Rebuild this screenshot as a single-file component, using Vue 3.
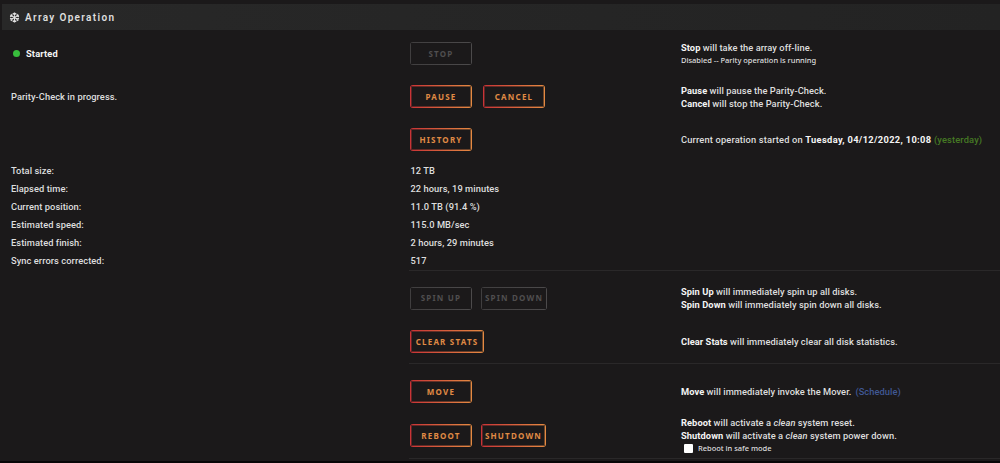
<template>
  <div class="page">
    <header class="title">
      <svg class="title__icon" viewBox="0 0 12 12" aria-hidden="true">
        <g v-for="angle in [0, 60, 120, 180, 240, 300]" :key="angle" :transform="`rotate(${angle} 6 6)`">
          <path d="M6 6V.6M4.2 1.4 6 3 7.8 1.4" />
        </g>
      </svg>
      <span>Array Operation</span>
    </header>

    <section class="group">
      <div class="row">
        <div class="status"><span class="orb"></span><b>Started</b></div>
        <div class="buttons"><button disabled>Stop</button></div>
        <div class="info">
          <p><b>Stop</b> will take the array off-line.</p>
          <p class="small">Disabled -- Parity operation is running</p>
        </div>
      </div>
      <div class="row">
        <div>Parity-Check in progress.</div>
        <div class="buttons buttons--wide"><button>Pause</button><button>Cancel</button></div>
        <div class="info">
          <p><b>Pause</b> will pause the Parity-Check.</p>
          <p><b>Cancel</b> will stop the Parity-Check.</p>
        </div>
      </div>
      <div class="row">
        <div></div>
        <div class="buttons"><button>History</button></div>
        <div class="info">
          <p class="started">
            Current operation started on <b class="date">Tuesday, 04/12/2022, 10:08</b>
            <span class="green"> (yesterday)</span>
          </p>
        </div>
      </div>
      <div v-for="item in details" :key="item.label" class="row row--detail">
        <div>{{ item.label }}</div>
        <div>{{ item.value }}</div>
      </div>
    </section>

    <section class="group group--line">
      <div class="row">
        <div></div>
        <div class="buttons"><button disabled>Spin up</button><button class="w66" disabled>Spin down</button></div>
        <div class="info">
          <p><b>Spin Up</b> will immediately spin up all disks.</p>
          <p><b>Spin Down</b> will immediately spin down all disks.</p>
        </div>
      </div>
      <div class="row">
        <div></div>
        <div class="buttons"><button class="w74">Clear stats</button></div>
        <div class="info">
          <p><b>Clear Stats</b> will immediately clear all disk statistics.</p>
        </div>
      </div>
    </section>

    <section class="group group--line">
      <div class="row">
        <div></div>
        <div class="buttons"><button>Move</button></div>
        <div class="info">
          <p><b>Move</b> will immediately invoke the Mover. <a class="schedule" href="#">(Schedule)</a></p>
        </div>
      </div>
      <div class="row row--last">
        <div></div>
        <div class="buttons"><button>Reboot</button><button class="w65">Shutdown</button></div>
        <div class="info">
          <p><b>Reboot</b> will activate a <em>clean</em> system reset.</p>
          <p><b>Shutdown</b> will activate a <em>clean</em> system power down.</p>
          <label class="small safemode"><input v-model="safemode" type="checkbox" />Reboot in safe mode</label>
        </div>
      </div>
    </section>
    <div class="group--line"></div>
  </div>
</template>

<script setup>
import { ref } from "vue";

const safemode = ref(false);

const details = [
  { label: "Total size:", value: "12 TB" },
  { label: "Elapsed time:", value: "22 hours, 19 minutes" },
  { label: "Current position:", value: "11.0 TB (91.4 %)" },
  { label: "Estimated speed:", value: "115.0 MB/sec" },
  { label: "Estimated finish:", value: "2 hours, 29 minutes" },
  { label: "Sync errors corrected:", value: "517" },
];
</script>

<style scoped>
.page {
  box-sizing: border-box;
  height: 463px;
  padding: 4px 0 0 2px;
  overflow: hidden;
  background: #1b191a;
  border-bottom: 2px solid #080607;
  color: #dedede;
  font-family: Roboto, "Noto Sans", sans-serif;
  font-size: 9.3px;
  font-weight: 500;
  letter-spacing: 0.06px;
  line-height: 13px;
}

.title {
  display: flex;
  align-items: center;
  gap: 5px;
  height: 26px;
  margin-bottom: 2px;
  padding-left: 7px;
  background: linear-gradient(90deg, #282828, #232323);
  font-size: 10px;
  font-weight: 600;
  letter-spacing: 1.33px;
}

.title__icon {
  width: 11px;
  height: 11px;
  fill: none;
  stroke: #e0e0e0;
  stroke-width: 1.2;
}

.row {
  display: grid;
  grid-template-columns: 399px 271px 1fr;
  align-items: center;
  height: 43.2px;
  padding-left: 9px;
  white-space: nowrap;
}

.row--detail {
  grid-template-columns: 399.5px 270.5px 1fr;
  height: 18.05px;
}

.row--last {
  height: 45px;
}

.group--line::before {
  content: "";
  display: block;
  height: 1px;
  margin: 0 0 6px 407px;
  background: #2a2829;
}

.status {
  display: flex;
  align-items: center;
  gap: 5px;
  padding-left: 2px;
}

.status b {
  letter-spacing: 0.15px;
}

.orb {
  width: 7px;
  height: 7px;
  margin-right: 1px;
  border-radius: 50%;
  background: #38bd3c;
}

b {
  color: #f4f4f4;
  font-weight: 700;
}

.started {
  letter-spacing: 0.15px;
}

.date {
  letter-spacing: 0.34px;
}

p {
  margin: 0;
}

.buttons {
  display: flex;
  gap: 9px;
}

.buttons--wide {
  gap: 11px;
}

/* the half transparent layer softens the inner edge of the gradient border */
button {
  box-sizing: border-box;
  width: 62px;
  height: 23px;
  padding: 0;
  border: 0;
  border-radius: 3px;
  background:
    linear-gradient(#1b191a, #1b191a) center / calc(100% - 4px) calc(100% - 4px) no-repeat,
    linear-gradient(#1b191a99, #1b191a99) center / calc(100% - 2px) calc(100% - 2px) no-repeat,
    linear-gradient(90deg, #c93336, #e58a42);
  color: #e08b45;
  font-family: "Noto Sans", sans-serif;
  font-size: 8px;
  font-weight: 700;
  line-height: 11px;
  padding-bottom: 1px;
  letter-spacing: 1.2px;
  text-transform: uppercase;
}

button:disabled {
  background:
    linear-gradient(#1b191a, #1b191a) center / calc(100% - 2px) calc(100% - 2px) no-repeat,
    linear-gradient(90deg, #403e3f, #4c4a4b);
  color: #504e4f;
}

.w65 {
  width: 65px;
}

.w66 {
  width: 66px;
}

.w74 {
  width: 74px;
}

.small {
  font-family: "Noto Sans", sans-serif;
  font-size: 7.5px;
  letter-spacing: -0.02px;
}

.green {
  color: #467a24;
}

.schedule {
  color: #405894;
  text-decoration: none;
}

.schedule::before {
  content: "";
  padding-left: 1.5px;
}

.safemode {
  display: flex;
  align-items: center;
  gap: 5px;
  padding-left: 3px;
}

.safemode input {
  appearance: none;
  width: 9px;
  height: 9px;
  margin: 0;
  border-radius: 1px;
  background: #fff;
}
</style>

<style>
body {
  background: #1b191a;
}
</style>
